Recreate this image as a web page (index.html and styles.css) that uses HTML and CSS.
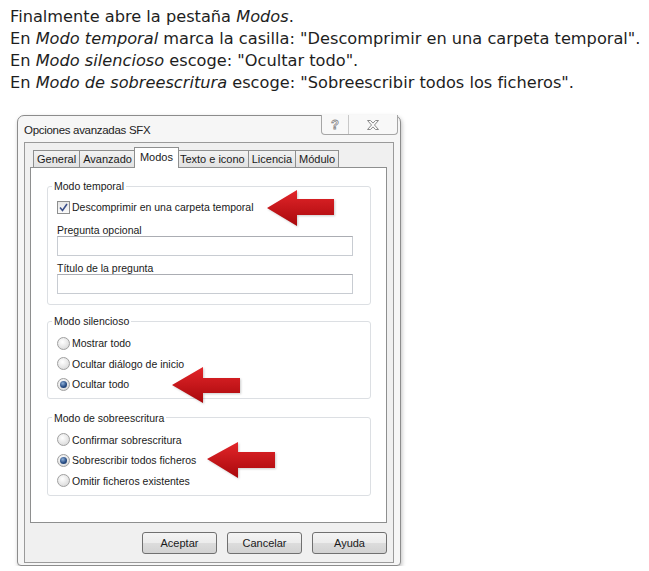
FILE: index.html
```html
<!DOCTYPE html>
<html lang="es">
<head>
<meta charset="utf-8">
<title>Opciones avanzadas SFX</title>
<link rel="stylesheet" href="styles.css">
</head>
<body>
<div class="intro">
  <p>Finalmente abre la pestaña <em>Modos</em>.</p>
  <p>En <em>Modo temporal</em> marca la casilla: "Descomprimir en una carpeta temporal".</p>
  <p>En <em>Modo silencioso</em> escoge: "Ocultar todo".</p>
  <p>En <em>Modo de sobreescritura</em> escoge: "Sobreescribir todos los ficheros".</p>
</div>

<div class="dialog">
  <div class="titlebar">
    <span class="title">Opciones avanzadas SFX</span>
    <div class="caption-btns">
      <span class="cap-help">?</span>
      <span class="cap-close">
        <svg width="14" height="12" viewBox="0 0 14 12"><path d="M1.5 1.5h3l2.5 2.6 2.5-2.6h3l-4 4.5 4 4.5h-3L7 7.9l-2.5 2.6h-3l4-4.5z" fill="#fafafa" stroke="#8a8a8a" stroke-width="1"/></svg>
      </span>
    </div>
  </div>

  <div class="client">
    <div class="tabs">
      <span class="tab">General</span>
      <span class="tab">Avanzado</span>
      <span class="tab active">Modos</span>
      <span class="tab">Texto e icono</span>
      <span class="tab">Licencia</span>
      <span class="tab">Módulo</span>
    </div>
    <div class="panel">
      <fieldset class="group g1">
        <legend>Modo temporal</legend>
        <div class="row first"><span class="check"><svg width="9" height="9" viewBox="0 0 9 9"><path d="M1 4.5l2.5 3L8 1" fill="none" stroke="#3b4f8a" stroke-width="1.6"/></svg></span>Descomprimir en una carpeta temporal</div>
        <div class="label l1">Pregunta opcional</div>
        <div class="input"></div>
        <div class="label l2">Título de la pregunta</div>
        <div class="input"></div>
      </fieldset>

      <fieldset class="group g2">
        <legend>Modo silencioso</legend>
        <div class="row radio-row first"><span class="radio"></span>Mostrar todo</div>
        <div class="row radio-row"><span class="radio"></span>Ocultar diálogo de inicio</div>
        <div class="row radio-row"><span class="radio on"></span>Ocultar todo</div>
      </fieldset>

      <fieldset class="group g3">
        <legend>Modo de sobreescritura</legend>
        <div class="row radio-row first"><span class="radio"></span>Confirmar sobrescritura</div>
        <div class="row radio-row"><span class="radio on"></span>Sobrescribir todos ficheros</div>
        <div class="row radio-row"><span class="radio"></span>Omitir ficheros existentes</div>
      </fieldset>
    </div>
    <div class="buttons">
      <span class="btn">Aceptar</span>
      <span class="btn">Cancelar</span>
      <span class="btn">Ayuda</span>
    </div>
  </div>

  <svg class="arrow a1" width="68" height="36" viewBox="0 0 68 36"><defs><linearGradient id="ag" x1="0" y1="0" x2="0" y2="1"><stop offset="0" stop-color="#e3262a"/><stop offset="1" stop-color="#a8080c"/></linearGradient></defs><path d="M0 18L30 0v9h37v16H30v11z" fill="url(#ag)"/></svg>
  <svg class="arrow a2" width="68" height="36" viewBox="0 0 68 36"><path d="M0 18L31 0v11h37v15H31v10z" fill="url(#ag)"/></svg>
  <svg class="arrow a3" width="68" height="36" viewBox="0 0 68 36"><path d="M0 17L31 0v10h37v16H31v10z" fill="url(#ag)"/></svg>
</div>
</body>
</html>
```

FILE: styles.css
```css
html, body {
  margin: 0;
  padding: 0;
  background: #ffffff;
}

.intro {
  padding: 6px 10px 0 10px;
  font-family: "DejaVu Sans", Verdana, sans-serif;
  font-size: 16.2px;
  line-height: 22px;
  color: #1e1e1e;
}
.intro p { margin: 0; white-space: nowrap; }

.dialog {
  position: relative;
  margin: 21px 0 0 17px;
  width: 384px;
  height: 451px;
  box-sizing: border-box;
  border: 1px solid #8c8c8c;
  border-radius: 7px 7px 4px 4px;
  background: #f6f6f6;
  box-shadow: 1px 2px 4px rgba(0,0,0,0.25);
  display: flex;
  flex-direction: column;
  font-family: "Liberation Sans", Arial, sans-serif;
  font-size: 10.5px;
  color: #1a1a1a;
}

.titlebar {
  height: 26px;
  display: flex;
  align-items: center;
  justify-content: space-between;
  padding-left: 6px;
  position: relative;
}
.title {
  font-size: 11.5px;
  letter-spacing: -0.3px;
  color: #222;
  margin-top: 1px;
}
.caption-btns {
  position: absolute;
  right: 2px;
  top: -1px;
  height: 19px;
  display: flex;
  border: 1px solid #a6a6a6;
  border-top: none;
  border-radius: 0 0 4px 4px;
  background: #f8f8f8;
}
.caption-btns span {
  display: flex;
  align-items: center;
  justify-content: center;
}
.cap-help {
  width: 26px;
  border-right: 1px solid #c8c8c8;
  font-size: 13px;
  font-weight: bold;
  color: #fafafa;
  -webkit-text-stroke: 0.8px #8a8a8a;
}
.cap-close { width: 48px; }

.client {
  flex: 1;
  margin: 0 6px 2px 6px;
  border: 1px solid #9a9a9a;
  background: #f0f0f0;
  padding: 4px 6px 8px 5px;
  display: flex;
  flex-direction: column;
}

.tabs {
  display: flex;
  align-items: flex-end;
  margin-left: 3px;
  height: 20px;
  position: relative;
  z-index: 1;
}
.tab {
  height: 17px;
  box-sizing: border-box;
  border: 1px solid #8e8f8f;
  border-bottom: none;
  border-left: none;
  padding: 0 3px;
  display: flex;
  align-items: center;
  font-size: 11px;
  background: linear-gradient(#f2f2f2, #e2e2e2);
  color: #1a1a1a;
}
.tab:first-child { border-left: 1px solid #8e8f8f; }
.tab.active {
  height: 21px;
  margin-bottom: -1px;
  margin-left: -2px;
  margin-right: -2px;
  padding: 0 5px 3px;
  background: #ffffff;
  border-left: 1px solid #8e8f8f;
  position: relative;
  z-index: 2;
}

.panel {
  height: 356px;
  box-sizing: border-box;
  border: 1px solid #8e8f8f;
  background: #ffffff;
  display: flex;
  flex-direction: column;
}

.group {
  margin: 0 15px 0 16px;
  padding: 0 16px 0 9px;
  border: 1px solid #dcdfe3;
  border-radius: 3px;
  min-width: 0;
}
.group legend {
  margin-left: -5px;
  padding: 0 2px;
  font-size: 10.5px;
  line-height: 14px;
  color: #1a1a1a;
}
.g1 { margin-top: 11px; padding-bottom: 10px; }
.g2 { margin-top: 9px; padding-bottom: 3px; }
.g3 { margin-top: 12px; padding-bottom: 4px; }

.row {
  display: flex;
  align-items: center;
  height: 16px;
  gap: 2px;
}
.g1 .row.first { margin-top: 6px; }
.radio-row { height: 20.5px; }
.g2 .row.first { margin-top: 5px; }
.g3 .row.first { margin-top: 5px; }

.check {
  width: 13px;
  height: 13px;
  box-sizing: border-box;
  border: 1px solid #8e8f8f;
  background: linear-gradient(#e6e6e6, #fafafa);
  display: flex;
  align-items: center;
  justify-content: center;
}

.radio {
  width: 13px;
  height: 13px;
  box-sizing: border-box;
  border-radius: 50%;
  border: 1px solid #a0a0a0;
  background: radial-gradient(circle at 40% 35%, #ffffff 0, #e4e4e4 60%, #cfcfcf 100%);
  display: flex;
  align-items: center;
  justify-content: center;
}
.radio.on::after {
  content: "";
  width: 7px;
  height: 7px;
  border-radius: 50%;
  background: radial-gradient(circle at 40% 35%, #8fb0d8 0, #2a4f86 55%, #102a55 100%);
}

.label {
  line-height: 12px;
  height: 12px;
}
.l1 { margin-top: 9px; }
.l2 { margin-top: 6px; }

.input {
  height: 20px;
  width: 296px;
  box-sizing: border-box;
  border: 1px solid #c8ccd2;
  border-top-color: #abadb3;
  background: #ffffff;
}

.buttons {
  display: flex;
  justify-content: flex-end;
  gap: 10px;
  margin-top: 9px;
}
.btn {
  width: 75px;
  height: 22px;
  box-sizing: border-box;
  border: 1px solid #707070;
  border-radius: 3px;
  background: linear-gradient(#f4f4f4 0, #ececec 48%, #dcdcdc 52%, #d2d2d2 100%);
  display: flex;
  align-items: center;
  justify-content: center;
  font-size: 11px;
  color: #1a1a1a;
}

.arrow {
  position: absolute;
  filter: drop-shadow(1px 1px 1px rgba(0,0,0,0.2));
}
.a1 { left: 249px; top: 74px; }
.a2 { left: 154px; top: 251px; }
.a3 { left: 189px; top: 326px; }
```
